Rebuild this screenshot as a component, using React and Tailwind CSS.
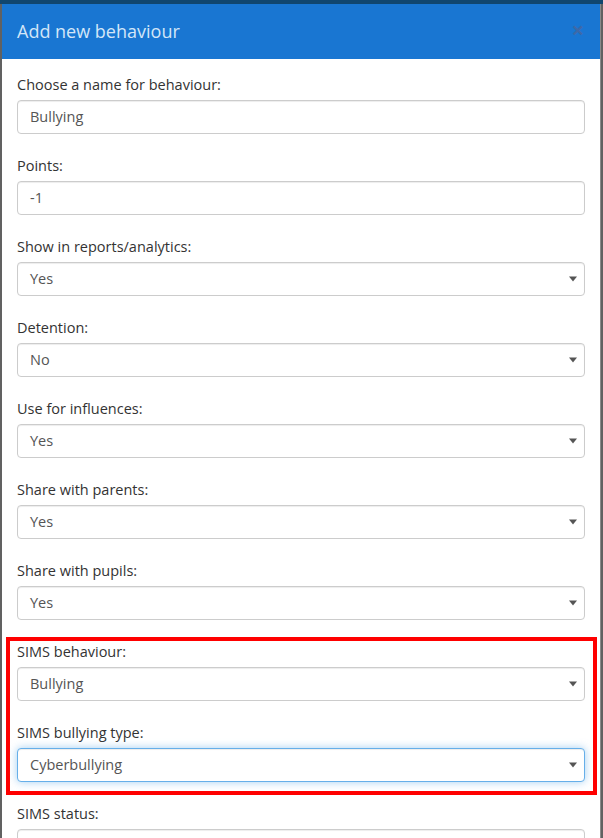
import React from "react";

const Caret = () => (
  <svg width="8" height="6" viewBox="0 0 8 6" className="shrink-0">
    <path d="M0 0.5 H8 L4 5.5 Z" fill="#555" />
  </svg>
);

function Field({ label, value, select = false, focused = false }) {
  const ring = focused
    ? "border-[#66afe9] shadow-[inset_0_1px_1px_rgba(0,0,0,0.075),0_0_8px_rgba(102,175,233,0.6)]"
    : "border-[#ccc] shadow-[inset_0_1px_1px_rgba(0,0,0,0.075)]";
  return (
    <div className="flex flex-col">
      <label className="mb-[5px] block h-5 text-[14.5px] font-medium leading-5 text-[#333]">{label}</label>
      <div
        className={`flex h-[34px] items-center justify-between rounded-[4px] border bg-white pl-3 pr-[7px] text-[14.5px] text-[#555] ${ring}`}
      >
        <span>{value}</span>
        {select && <Caret />}
      </div>
    </div>
  );
}

export default function App() {
  return (
    <div className="relative h-[838px] w-[603px] overflow-hidden bg-[#616161] font-['Open_Sans',sans-serif]">
      {/* page behind the modal backdrop */}
      <div className="h-[4px] bg-[#10466f]" />
      <div className="flex">
        <div className="w-[2px] shrink-0" />
        <div className="w-[598px] shrink-0 bg-white">
          <div className="flex h-[55px] items-center justify-between bg-[#1976d2] pl-[15px] pr-[16px]">
            <h4 className="text-[18px] font-normal text-[#d3e6f8]">Add new behaviour</h4>
            <span className="mt-[-6px] text-[22px] font-bold leading-none text-[#3d69a8]">×</span>
          </div>
          <div className="flex flex-col gap-[22px] px-[15px] pt-[16px]">
            <Field label="Choose a name for behaviour:" value="Bullying" />
            <Field label="Points:" value="-1" />
            <Field label="Show in reports/analytics:" value="Yes" select />
            <Field label="Detention:" value="No" select />
            <Field label="Use for influences:" value="Yes" select />
            <Field label="Share with parents:" value="Yes" select />
            <Field label="Share with pupils:" value="Yes" select />
            <div className="-mb-[13px] -ml-[11px] -mr-[12px] -mt-[5px] flex flex-col gap-[22px] border-[4px] border-[#ff0000] pb-[9px] pl-[7px] pr-[8px] pt-[1px]">
              <Field label="SIMS behaviour:" value="Bullying" select />
              <Field label="SIMS bullying type:" value="Cyberbullying" select focused />
            </div>
            <Field label="SIMS status:" value="" select />
          </div>
        </div>
        <div className="w-[1px] shrink-0 bg-[#8a8a8a]" />
      </div>
    </div>
  );
}
